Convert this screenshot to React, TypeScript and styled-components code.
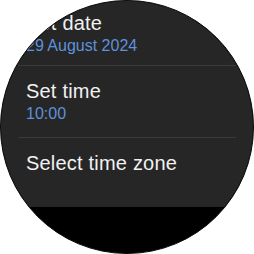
import styled, { createGlobalStyle } from "styled-components";

const GlobalStyle = createGlobalStyle`
  html, body {
    margin: 0;
    padding: 0;
    background: #ffffff;
  }
  body {
    font-family: "Liberation Sans", Arial, sans-serif;
  }
`;

const S = {
  Watch: styled.div`
    width: 254px;
    height: 254px;
    box-sizing: border-box;
    border-radius: 50%;
    border: 1px solid #0c0c0c;
    background-color: #000000;
    overflow: hidden;
  `,
  Card: styled.ul`
    list-style-type: none;
    margin: -3px 0 0 0;
    padding: 0 17px 19px 17px;
    background-color: #262626;
  `,
  Item: styled.li<{ $first?: boolean }>`
    padding: 13px 8px ${(props) => (props.$first ? "9px" : "13px")} 8px;
    border-top: ${(props) => (props.$first ? "none" : "1px solid #3a3a3a")};
    display: flex;
    flex-direction: column;
    gap: 1px;
  `,
  Title: styled.span`
    font-size: 20px;
    line-height: 24px;
    letter-spacing: 0.2px;
    color: #f1f1f1;
    white-space: nowrap;
  `,
  Value: styled.span`
    font-size: 16px;
    line-height: 20px;
    color: #5f91dc;
    white-space: nowrap;
  `,
};

const settings = [
  { title: "Set date", value: "29 August 2024" },
  { title: "Set time", value: "10:00" },
  { title: "Select time zone", value: "" },
];

function App() {
  return (
    <>
      <GlobalStyle />
      <S.Watch>
        <S.Card>
          {settings.map((item, index) => (
            <S.Item key={item.title} $first={index === 0}>
              <S.Title>{item.title}</S.Title>
              {item.value ? <S.Value>{item.value}</S.Value> : null}
            </S.Item>
          ))}
        </S.Card>
      </S.Watch>
    </>
  );
}

export default App;
